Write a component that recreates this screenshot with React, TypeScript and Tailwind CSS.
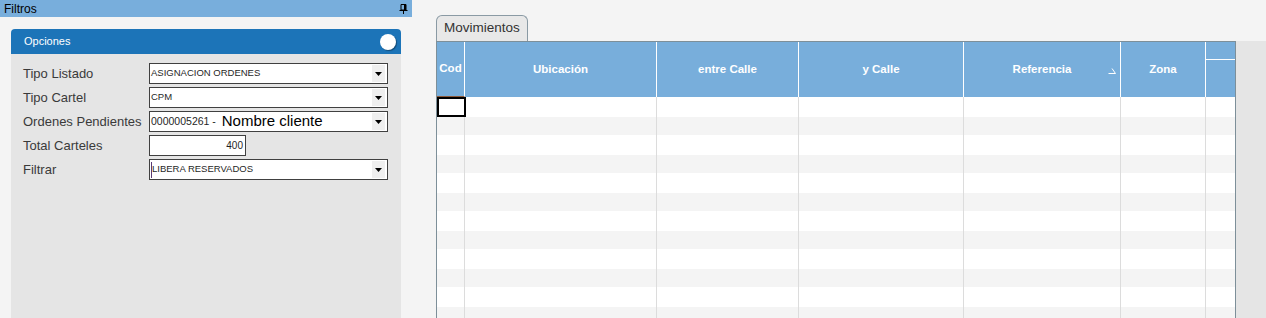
import React from "react";

const cols = [28, 192, 142, 165, 157, 85, 29];
const headers = ["Cod", "Ubicación", "entre Calle", "y Calle", "Referencia", "Zona", ""];

function Arrow() {
  return (
    <div className="ml-auto mr-[2px] w-[13px] h-[17px] bg-[#efefef] flex items-center justify-center">
      <svg width="7" height="4" viewBox="0 0 7 4">
        <path d="M0 0 L7 0 L3.5 4 Z" fill="#000" />
      </svg>
    </div>
  );
}

function SelectBox({ children }: { children: React.ReactNode }) {
  return (
    <div className="h-[21px] w-[239px] border border-[#404040] bg-white flex items-center pl-[1px] overflow-hidden">
      {children}
      <Arrow />
    </div>
  );
}

export default function App() {
  const rows = Array.from({ length: 12 }, (_, i) => i);
  return (
    <div
      className="w-[1266px] h-[318px] overflow-hidden bg-[#f4f4f4] flex"
      style={{ fontFamily: '"Liberation Sans", Arial, sans-serif' }}
    >
      {/* Left panel */}
      <div className="w-[412px] h-full flex flex-col">
        <div className="h-[17px] shrink-0 bg-[#78aedc] flex items-center justify-between pl-[4px] pr-[4px]">
          <span className="text-[12px] text-black leading-none">Filtros</span>
          <svg width="9" height="10" viewBox="0 0 9 10">
            <path d="M2 0.5 H7 V6 H2 Z" fill="none" stroke="#000" strokeWidth="1" />
            <rect x="5" y="0.5" width="2" height="5.5" fill="#000" />
            <rect x="0.5" y="6" width="8" height="1" fill="#000" />
            <rect x="4" y="7" width="1" height="3" fill="#000" />
          </svg>
        </div>
        <div className="ml-[11px] mt-[12px] w-[390px] flex-1 flex flex-col">
          <div className="h-[25px] shrink-0 bg-[#1c74b8] rounded-t-[4px] flex items-center justify-between pl-[13px] pr-[5px]">
            <span className="text-[11px] text-white">Opciones</span>
            <div className="w-[16px] h-[16px] rounded-full bg-white shadow-[1px_1px_1px_rgba(0,0,0,0.35)]" />
          </div>
          <div className="flex-1 bg-[#e5e5e5] pt-[9px] pl-[12px]">
            <div className="grid grid-cols-[126px_239px] auto-rows-[21px] gap-y-[3px] items-center text-[13px] text-[#3a3a3a]">
              <span>Tipo Listado</span>
              <SelectBox>
                <span className="text-[9.5px] text-[#1f1f1f]">ASIGNACION ORDENES</span>
              </SelectBox>
              <span>Tipo Cartel</span>
              <SelectBox>
                <span className="text-[9.5px] text-[#1f1f1f]">CPM</span>
              </SelectBox>
              <span>Ordenes Pendientes</span>
              <SelectBox>
                <span className="text-[10.5px] text-[#1f1f1f] whitespace-pre">0000005261 - </span>
                <span className="text-[15px] text-black ml-[3px]">Nombre cliente</span>
              </SelectBox>
              <span>Total Carteles</span>
              <div className="h-[21px] w-[97px] border border-[#404040] bg-white flex items-center justify-end pr-[2px]">
                <span className="text-[10px] text-[#1f1f1f]">400</span>
              </div>
              <span>Filtrar</span>
              <SelectBox>
                <div className="w-[1px] h-[16px] bg-[#5b3a74]" />
                <span className="text-[9.5px] text-[#1f1f1f]">LIBERA RESERVADOS</span>
              </SelectBox>
            </div>
          </div>
        </div>
      </div>

      {/* Gap */}
      <div className="w-[24px] shrink-0" />

      {/* Right area */}
      <div className="flex-1 flex flex-col pt-[15px] min-h-0">
        <div className="w-[92px] h-[26px] shrink-0 border border-b-0 border-[#8a9aa4] rounded-t-[6px] bg-[#e8e8e8] flex items-center pl-[7px]">
          <span className="text-[13.5px] text-[#333]">Movimientos</span>
        </div>
        <div className="flex-1 flex min-h-0">
          <div className="w-[800px] shrink-0 border-l border-t border-r border-[#7d8f99] flex flex-col overflow-hidden">
            {/* Header */}
            <div className="flex h-[55px] shrink-0 bg-[#78aedb]">
              {cols.map((w, i) => {
                const last = i === cols.length - 1;
                return (
                  <div
                    key={i}
                    style={{ width: w }}
                    className={`h-full relative flex items-center justify-center text-[11.5px] font-bold text-white ${
                      last ? "flex-col" : "border-r border-white"
                    } ${i === 0 ? "border-b border-b-[#8b5a3c]" : ""}`}
                  >
                    {last ? (
                      <>
                        <div className="w-full h-[18px] border-b border-white" />
                        <div className="w-full flex-1" />
                      </>
                    ) : (
                      <span>{headers[i]}</span>
                    )}
                    {i === 4 && (
                      <svg
                        width="8"
                        height="6"
                        viewBox="0 0 8 6"
                        className="absolute right-[4px] top-[26px]"
                      >
                        <path d="M4 0.5 L7.5 5.5 H0.5" fill="none" stroke="#fff" strokeWidth="1" />
                      </svg>
                    )}
                  </div>
                );
              })}
            </div>
            {/* Body */}
            <div className="relative flex-1 flex flex-col min-h-0">
              {rows.map((r) => (
                <div
                  key={r}
                  className={`flex shrink-0 ${r % 2 === 0 ? "h-[20px] bg-white" : "h-[18px] bg-[#f4f4f4]"}`}
                >
                  {cols.map((w, i) => (
                    <div
                      key={i}
                      style={{ width: w }}
                      className={`h-full ${i === cols.length - 1 ? "" : "border-r border-[#dcdcdc]"}`}
                    />
                  ))}
                </div>
              ))}
              <div className="absolute left-0 top-0 w-[29px] h-[20px] border-2 border-black" />
            </div>
          </div>
          <div className="flex-1 bg-[#e5e5e5]" />
        </div>
      </div>
    </div>
  );
}
